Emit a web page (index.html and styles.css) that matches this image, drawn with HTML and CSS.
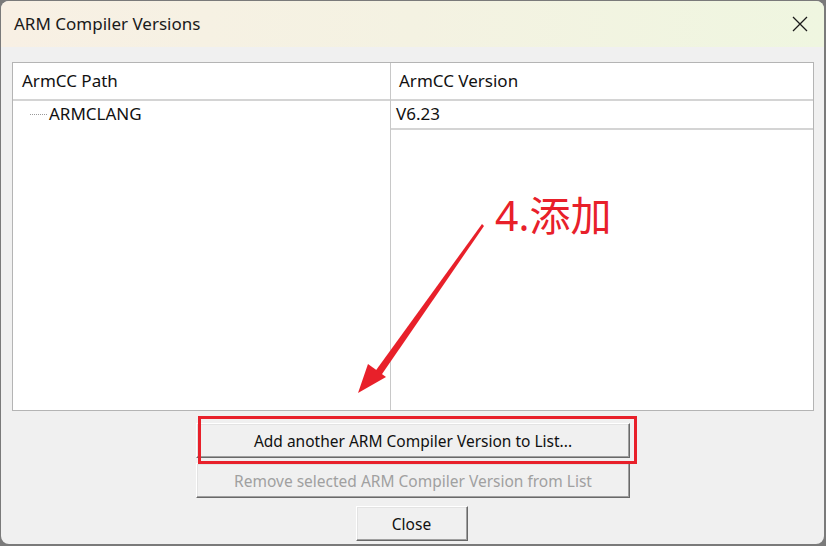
FILE: index.html
```html
<!DOCTYPE html>
<html lang="en">
<head>
  <meta charset="UTF-8" />
  <meta name="viewport" content="width=device-width, initial-scale=1.0" />
  <title>ARM Compiler Versions</title>
  <link rel="stylesheet" href="styles.css">
</head>
<body>

  <!-- Dialog window -->
  <div class="window">
    <div class="titlebar">
      <span class="title">ARM Compiler Versions</span>
      <svg class="close-x" width="16" height="16" viewBox="0 0 16 16">
        <path d="M1 1 L15 15 M15 1 L1 15" stroke="#1a1a1a" stroke-width="1.3" fill="none" />
      </svg>
    </div>

    <div class="dialog-body">
      <!-- Compiler list -->
      <div class="list">
        <div class="col col-path">
          <div class="list-head">ArmCC Path</div>
          <div class="list-row"><span class="tree-dots"></span>ARMCLANG</div>
        </div>
        <div class="col col-version">
          <div class="list-head">ArmCC Version</div>
          <div class="list-row row-line">V6.23</div>
        </div>
      </div>

      <!-- Buttons -->
      <div class="buttons">
        <div class="highlight-wrap">
          <button class="btn btn-wide">Add another ARM Compiler Version to List...</button>
          <span class="red-box"></span>
        </div>
        <button class="btn btn-wide" disabled>Remove selected ARM Compiler Version from List</button>
        <button class="btn btn-close">Close</button>
      </div>

      <!-- Annotation -->
      <span class="note">4.添加</span>
      <svg class="arrow" width="140" height="190" viewBox="0 0 140 190">
        <polygon points="127,3 129,5 25,156 19,152" fill="#e8202a" />
        <polygon points="3,172 13,143 31,156" fill="#e8202a" />
      </svg>
    </div>
  </div>

</body>
</html>
```

FILE: styles.css
```css
/* Backdrop behind the dialog */
body {
  margin: 0;
  width: 826px;
  height: 546px;
  background-color: #7a7a7a;
  font-family: "Noto Sans", "Open Sans", sans-serif;
  overflow: hidden;
}

/* Dialog frame */
.window {
  margin: 1px 0 0 1px;
  width: 823px;
  height: 543px;
  border-radius: 8px;
  background-color: #f0f0f0;
  overflow: hidden;
  display: flex;
  flex-direction: column;
}

/* Title bar */
.titlebar {
  height: 46px;
  flex: none;
  display: flex;
  align-items: center;
  justify-content: space-between;
  padding: 0 16px 0 13px;
  background: linear-gradient(90deg, #f8f0e4 0%, #f4f2e2 50%, #eff6e0 100%);
}

.title {
  font-size: 17px;
  color: #1a1a1a;
  margin-top: -2px;
}

.close-x {
  margin-top: -1px;
}

/* Main area */
.dialog-body {
  position: relative;
  flex: 1;
  padding: 15px 10px 0 11px;
}

/* List view */
.list {
  height: 347px;
  border: 1px solid #b4b4b4;
  background-color: #ffffff;
  display: flex;
  font-size: 17px;
  color: #111;
}

.col-path {
  width: 377px;
  border-right: 1px solid #c8c8c8;
}

.col-version {
  flex: 1;
}

.list-head {
  height: 36px;
  line-height: 36px;
  padding-left: 9px;
  border-bottom: 2px solid #d4d4d4;
}

.col-version .list-head {
  padding-left: 8px;
}

.list-row {
  height: 28px;
  line-height: 28px;
  padding-left: 17px;
  display: flex;
  align-items: center;
  margin-top: -1px;
}

.col-version .list-row {
  padding-left: 5px;
}

.row-line {
  border-bottom: 2px solid #d4d4d4;
}

/* Dotted tree connector */
.tree-dots {
  width: 17px;
  margin-right: 2px;
  margin-top: 1px;
  border-top: 1px dotted #9a9a9a;
}

/* Button column */
.buttons {
  display: flex;
  flex-direction: column;
  align-items: center;
  padding-top: 12px;
  gap: 5px;
}

.btn {
  font-family: "Noto Sans", "Open Sans", sans-serif;
  font-size: 15.5px;
  color: #111;
  background-color: #f0f0f0;
  border: 1px solid;
  border-color: #ffffff #696969 #696969 #ffffff;
  box-shadow: inset -1px -1px 0 #a0a0a0, inset 1px 1px 0 #e3e3e3;
  padding: 0;
}

.btn-wide {
  width: 434px;
  height: 35px;
}

.btn[disabled] {
  color: #a0a0a0;
}

.btn-close {
  width: 112px;
  height: 35px;
  margin-top: 3px;
  margin-right: 3px;
}

/* Red highlight around the add button */
.highlight-wrap {
  position: relative;
}

.red-box {
  position: absolute;
  left: 2px;
  top: -7px;
  width: 433px;
  height: 42px;
  border: 3px solid #e8202a;
}

/* Annotation text and arrow */
.note {
  position: absolute;
  left: 494px;
  top: 136px;
  font-family: "Noto Sans", "Noto Sans CJK SC", sans-serif;
  font-size: 41px;
  color: #e8202a;
}

.arrow {
  position: absolute;
  left: 354px;
  top: 174px;
}
```
